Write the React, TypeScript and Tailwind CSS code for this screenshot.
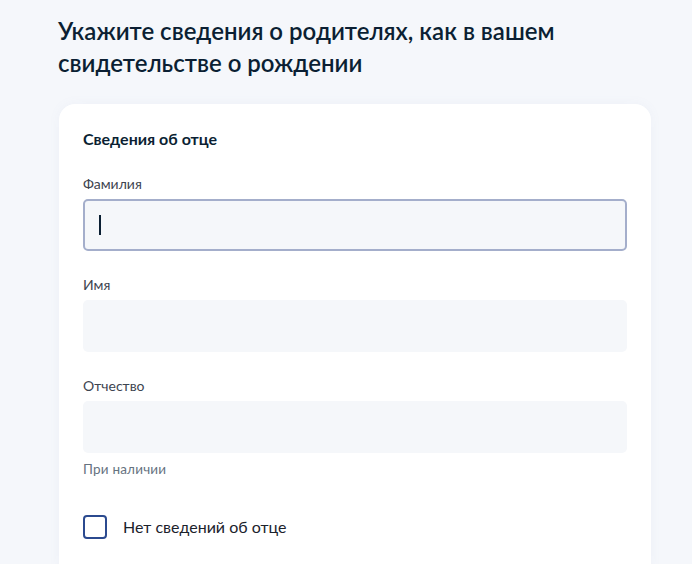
export default function App() {
  const fields = [
    { label: 'Фамилия', focused: true, hint: '' },
    { label: 'Имя', focused: false, hint: '' },
    { label: 'Отчество', focused: false, hint: 'При наличии' },
  ]

  return (
    <div className="min-h-[564px] h-[564px] overflow-hidden bg-[#f5f7fb] text-[#0b1f33]" style={{ fontFamily: 'Lato, "Open Sans", sans-serif' }}>
      <div className="ml-[58px] w-[593px] pt-[15px]">
        <h1 className="text-[24px] leading-[32px] font-semibold pr-[40px]">
          Укажите сведения о родителях, как в вашем свидетельстве о рождении
        </h1>

        <div className="mt-[25px] ml-[1px] rounded-[16px] bg-white px-[24px] pt-[24px] pb-[40px] shadow-[0_0_12px_rgba(120,140,180,0.06)]">
          <h2 className="text-[16px] leading-[22px] font-bold">Сведения об отце</h2>

          <div className="mt-[24px] flex flex-col gap-[24px]">
            {fields.map((f) => (
              <div key={f.label}>
                <label className="block text-[14px] leading-[20px] text-[#3d4450] mb-[5px]">{f.label}</label>
                {f.focused ? (
                  <div className="h-[52px] rounded-[5px] border-2 border-[#a4aecb] bg-[#f5f7fa] flex items-center pl-[14px]">
                    <span className="block w-[1.5px] h-[20px] bg-[#0b1f33]" />
                  </div>
                ) : (
                  <div className="h-[52px] rounded-[5px] bg-[#f5f7fa]" />
                )}
                {f.hint && (
                  <p className="mt-[7px] text-[13.5px] leading-[18px] text-[#66727f] tracking-[0.2px]">{f.hint}</p>
                )}
              </div>
            ))}
          </div>

          <label className="mt-[37px] flex items-center gap-[16px]">
            <span className="w-[24px] h-[24px] rounded-[4px] border-2 border-[#2b4a8f] bg-white" />
            <span className="text-[16px] leading-[22px] text-[#1b222c]">Нет сведений об отце</span>
          </label>
        </div>
      </div>
    </div>
  )
}
